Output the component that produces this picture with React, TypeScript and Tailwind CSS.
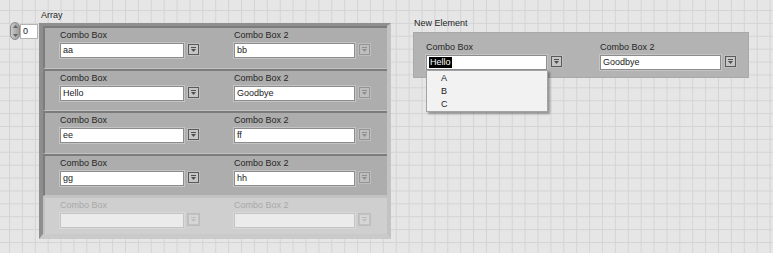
import React from "react";

const FONT = { fontFamily: '"Liberation Sans", Arial, sans-serif' };

function Tri({ color }: { color: string }) {
  return (
    <svg width="5" height="5" viewBox="0 0 5 5">
      <rect x="0" y="0" width="5" height="1" fill={color} />
      <path d="M0 2 H5 L2.5 5 Z" fill={color} />
    </svg>
  );
}

function DropBtn({ kind }: { kind: "dark" | "light" | "disabled" }) {
  const cls =
    kind === "dark"
      ? "border-[#5a5a5a] bg-[#c6c6c6]"
      : kind === "light"
      ? "border-[#959595] bg-[#bebebe]"
      : "border-[#c2c2c2] bg-[#d6d6d6]";
  const c = kind === "dark" ? "#4f4f4f" : kind === "light" ? "#8e8e8e" : "#bdbdbd";
  return (
    <div
      className={`w-[11px] h-[11px] mt-[1px] ml-[1px] border ${cls} flex items-center justify-center shadow-[0_0_0_1px_#bdbdbd]`}
    >
      <Tri color={c} />
    </div>
  );
}

function Field({
  w,
  text,
  disabled,
  children,
}: {
  w: string;
  text?: string;
  disabled?: boolean;
  children?: React.ReactNode;
}) {
  return (
    <div
      className={`${w} h-[15px] relative border ${
        disabled
          ? "border-[#c4c4c4] bg-[#ebebeb] shadow-[0_0_0_1px_#d8d8d8]"
          : "border-[#8c8c8c] bg-white shadow-[0_0_0_1px_#c4c4c4]"
      } text-[9px] leading-[13px] pl-[2px] text-[#1b1b1b]`}
    >
      {children ?? text}
    </div>
  );
}

function Element({
  a,
  b,
  disabled,
  h,
}: {
  a: string;
  b: string;
  disabled?: boolean;
  h: string;
}) {
  return (
    <div
      className={`${h} shrink-0 border-t-2 border-l-2 ${
        disabled
          ? "bg-[#cfcfcf] border-t-[#c2c2c2] border-l-[#c2c2c2]"
          : "bg-[#adadad] border-t-[#7c7c7c] border-l-[#7c7c7c] border-b border-b-[#c2c2c2]"
      } flex pl-[15px]`}
    >
      <div className="flex flex-col">
        <div
          className={`h-[15px] text-[9px] leading-[14px] ${
            disabled ? "text-[#a9a9a9]" : "text-[#262626]"
          }`}
        >
          Combo Box
        </div>
        <div className="flex gap-[3px]">
          <Field w="w-[124px]" text={a} disabled={disabled} />
          <DropBtn kind={disabled ? "disabled" : "dark"} />
        </div>
      </div>
      <div className="flex flex-col ml-[35px]">
        <div
          className={`h-[15px] text-[9px] leading-[14px] ${
            disabled ? "text-[#a9a9a9]" : "text-[#262626]"
          }`}
        >
          Combo Box 2
        </div>
        <div className="flex gap-[3px]">
          <Field w="w-[121px]" text={b} disabled={disabled} />
          <DropBtn kind={disabled ? "disabled" : "light"} />
        </div>
      </div>
    </div>
  );
}

export default function App() {
  return (
    <div
      style={FONT}
      className="w-[773px] h-[253px] overflow-hidden bg-[#e6e6e6] bg-[linear-gradient(to_right,#d4d4d4_1px,transparent_1px),linear-gradient(to_bottom,#d4d4d4_1px,transparent_1px)] bg-[size:12.9px_12.9px] bg-[position:9px_10px] flex"
    >
      {/* Array */}
      <div className="flex flex-col pl-[10px] pt-[9px]">
        <div className="ml-[31px] h-[13px] text-[9px] leading-[13px] text-[#262626]">Array</div>
        <div className="flex items-start">
          {/* index */}
          <div className="flex">
            <div className="w-[10px] h-[18px] rounded-full bg-[linear-gradient(to_right,#c9c9c9,#9d9d9d)] border border-[#8a8a8a] flex flex-col items-center justify-between py-[2px]">
              <svg width="5" height="3" viewBox="0 0 5 3">
                <path d="M0 3 L2.5 0 L5 3 Z" fill="#666" />
              </svg>
              <svg width="5" height="3" viewBox="0 0 5 3">
                <path d="M0 0 L2.5 3 L5 0 Z" fill="#666" />
              </svg>
            </div>
            <div className="w-[18px] h-[15px] mt-[2px] bg-white border border-[#b4b4b4] text-[9px] leading-[13px] pl-[2px] text-[#1b1b1b]">
              0
            </div>
          </div>
          {/* frame */}
          <div className="mt-[1px] ml-[1px] w-[352px] h-[216px] bg-[#a7a7a7] border-t-[3px] border-l-[4px] border-r-[4px] border-b-[5px] border-t-[#8f8f8f] border-l-[#8e8e8e] border-r-[#c3c3c3] border-b-[#cacaca] flex flex-col overflow-hidden">
            <Element a="aa" b="bb" h="h-[43px]" />
            <Element a="Hello" b="Goodbye" h="h-[42px]" />
            <Element a="ee" b="ff" h="h-[43px]" />
            <Element a="gg" b="hh" h="h-[42px]" />
            <Element a="" b="" h="h-[43px]" disabled />
          </div>
        </div>
      </div>

      {/* New Element */}
      <div className="flex flex-col ml-[22px] pt-[17px]">
        <div className="ml-[1px] h-[13px] text-[9px] leading-[13px] text-[#262626]">New Element</div>
        <div className="mt-[2px] w-[336px] h-[46px] bg-[#b3b3b3] border border-[#a9a9a9] flex pl-[12px] pt-[7px]">
          <div className="flex flex-col">
            <div className="h-[15px] text-[9px] leading-[14px] text-[#262626]">Combo Box</div>
            <div className="flex gap-[3px]">
              <Field w="w-[121px]">
                <div className="flex items-center h-full">
                  <span className="bg-black text-white px-[1px] leading-[11px]">Hello</span>
                </div>
                <div className="absolute left-[-1px] top-[14px] w-[122px] h-[42px] z-10 bg-[#f2f2f2] border border-[#a3a3a3] shadow-[2px_2px_2px_rgba(0,0,0,0.35)] pt-[1px] pl-[14px] text-[9px] leading-[13px] text-[#1b1b1b]">
                  <div>A</div>
                  <div>B</div>
                  <div>C</div>
                </div>
              </Field>
              <DropBtn kind="dark" />
            </div>
          </div>
          <div className="flex flex-col ml-[38px]">
            <div className="h-[15px] text-[9px] leading-[14px] text-[#262626]">Combo Box 2</div>
            <div className="flex gap-[3px]">
              <Field w="w-[121px]" text="Goodbye" />
              <DropBtn kind="dark" />
            </div>
          </div>
        </div>
      </div>
    </div>
  );
}
